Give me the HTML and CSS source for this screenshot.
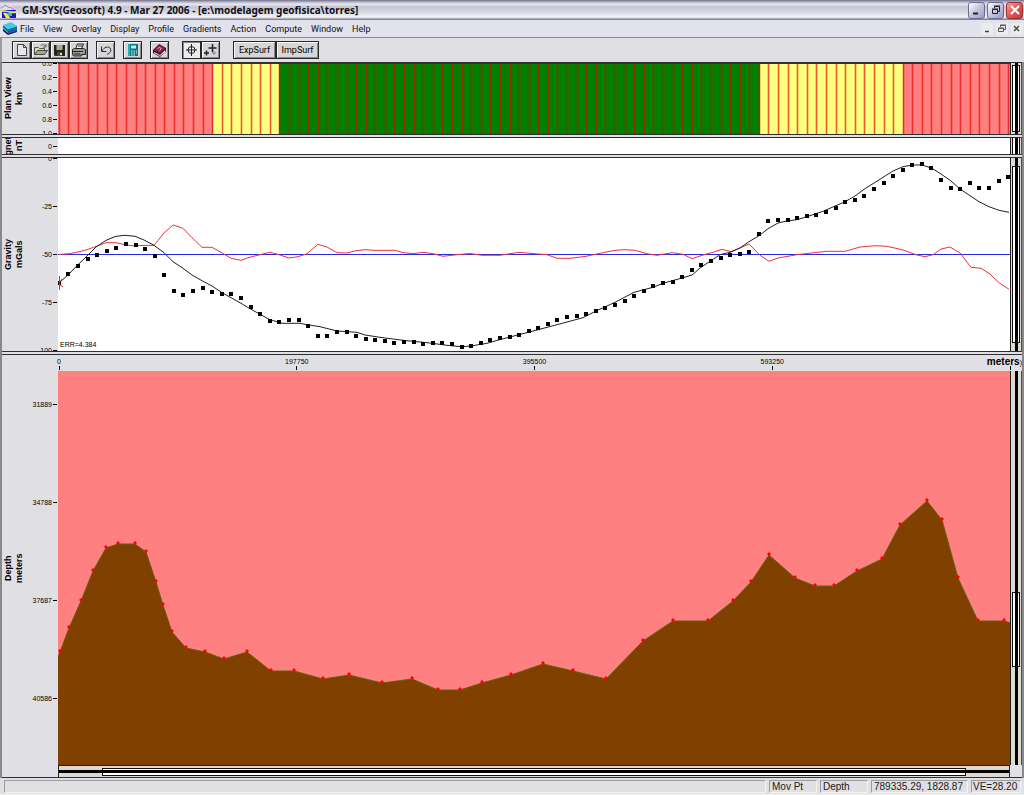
FILE: index.html
```html
<!DOCTYPE html>
<html lang="en">
<head>
<meta charset="utf-8">
<title>GM-SYS(Geosoft) 4.9</title>
<link rel="stylesheet" href="styles.css">
</head>
<body>
<div class="window">
  <header class="titlebar">
    <svg class="app-icon" width="14" height="16" viewBox="0 0 14 16" aria-hidden="true">
      <path d="M0 2h7l4 3v4H0z" fill="#dcdcf0"/>
      <path d="M0 6l3-3 3 2 4 1 4 4" fill="none" stroke="#d860d8"/>
      <path d="M0 8h14v8H0z" fill="#1818c8"/>
      <path d="M0 8c5 0 7 2 14 1v2C8 12 5 9 0 10z" fill="#e8f040"/>
      <path d="M1 11c4-1 6 2 7 5H4z" fill="#f0f040"/>
      <path d="M5 11h5v3H6z" fill="#30b8d0"/>
    </svg>
    <h1 class="title">GM-SYS(Geosoft) 4.9 - Mar 27 2006 - [e:\modelagem geofisica\torres]</h1>
    <div class="caption-buttons">
      <button class="cap" aria-label="Minimize"><svg width="14" height="14" viewBox="0 0 14 14"><path d="M3 10.500h5" stroke="#223" stroke-width="2"/></svg></button>
      <button class="cap" aria-label="Restore"><svg width="14" height="14" viewBox="0 0 14 14"><path d="M5.500 5V3.500h5v5H9M3.500 6.500h5v4h-5zM3 6h6M5 3h6" fill="none" stroke="#223"/></svg></button>
      <button class="cap cap-close" aria-label="Close"><svg width="14" height="14" viewBox="0 0 14 14"><path d="M3 3l8 8M11 3l-8 8" stroke="#fff" stroke-width="2"/></svg></button>
    </div>
  </header>

  <nav class="menubar">
    <svg class="doc-icon" width="14" height="14" viewBox="0 0 14 14" aria-hidden="true">
      <path d="M0 9l5 4 9-3v-3L5 9 0 6z" fill="#101830"/>
      <path d="M0 6l5 4 9-3V4L5 7 0 3z" fill="#0878a0"/>
      <path d="M0 3l8-3 6 4-9 3z" fill="#48c8e8"/>
      <path d="M5 10l9-3v2l-9 3z" fill="#2858b8"/>
      <path d="M0 6l5 4v1L0 7z" fill="#60e0e0"/>
    </svg>
    <a href="#">File</a><a href="#">View</a><a href="#">Overlay</a><a href="#">Display</a><a href="#">Profile</a><a href="#">Gradients</a><a href="#">Action</a><a href="#">Compute</a><a href="#">Window</a><a href="#">Help</a>
    <div class="mdi-buttons">
      <button class="mdi" aria-label="Minimize document"><svg width="12" height="12" viewBox="0 0 12 12"><path d="M4 8.500h4" stroke="#444" stroke-width="1.500"/></svg></button>
      <button class="mdi" aria-label="Restore document"><svg width="12" height="12" viewBox="0 0 12 12"><path d="M4.500 4V2.500h5v4H8M2.500 5.500h5v3h-5zM2 5h6M4 2h6" fill="none" stroke="#565a50"/></svg></button>
      <button class="mdi" aria-label="Close document"><svg width="12" height="12" viewBox="0 0 12 12"><path d="M3 3l5 5M8 3l-5 5" stroke="#444c40" stroke-width="1.500"/></svg></button>
    </div>
  </nav>

  <div class="toolbar">
    <div class="group">
      <button class="tool" aria-label="New"><svg width="17" height="16" viewBox="0 0 17 16"><path d="M4.500 2.500h6l3 3v8h-9z" fill="#e8e8ea" stroke="#444"/><path d="M10.500 2.500v3h3" fill="none" stroke="#444"/></svg></button>
      <button class="tool" aria-label="Open"><svg width="17" height="16" viewBox="0 0 17 16"><path d="M2.500 12V5.500h4l1 1h5v2" fill="#d8d8a8" stroke="#555"/><path d="M2.500 12.500l3-4h10l-3 4z" fill="#a8a878" stroke="#444"/><path d="M9 4c1-2 3-2 4 0M14 2v3h-3" fill="none" stroke="#555"/></svg></button>
      <button class="tool" aria-label="Save"><svg width="17" height="16" viewBox="0 0 17 16"><path d="M3 3h11v11H4l-1-1z" fill="#22261a"/><path d="M5.500 3h6v5h-6z" fill="#a8ac98"/><path d="M6 10h5v4H6z" fill="#45493a"/><path d="M9 11h2v2H9z" fill="#ddd"/></svg></button>
      <button class="tool" aria-label="Print"><svg width="17" height="16" viewBox="0 0 17 16"><path d="M5.500 7l2-5h6l-2 5" fill="#eee" stroke="#222"/><path d="M2.500 7.500l2-1h9l2 1v5h-3l-1 1.500h-8l-1-1.500z" fill="#999" stroke="#222"/><path d="M3 9.500h10M4 12h8M8 4h4" stroke="#222"/><path d="M10 11h2" stroke="#dddd60"/></svg></button>
    </div>
    <div class="group"><button class="tool" aria-label="Undo"><svg width="17" height="16" viewBox="0 0 17 16"><path d="M4.500 4.500v5h5M5 9c2-4 6-5 8-3 2 3 0 5-3 6.500" fill="none" stroke="#333"/></svg></button></div>
    <div class="group"><button class="tool" aria-label="Calculator"><svg width="17" height="16" viewBox="0 0 17 16"><path d="M4 2h10v12H4z" fill="#087888"/><path d="M4 2h2v12H4z" fill="#20b0b8"/><path d="M7 3.500h5v3H7z" fill="#b8f0f0"/><path d="M7 9h1.500M9.500 9h1.500M12 9h1M7 11h1.500M9.500 11h1.500M12 11h1M7 13h1.500M9.500 13h1.500" stroke="#f0f0f0"/></svg></button></div>
    <div class="group"><button class="tool" aria-label="Help book"><svg width="17" height="16" viewBox="0 0 17 16"><path d="M2 8l6-6 7 4v3l-6 6-7-4z" fill="#401030"/><path d="M3 8l5-5 6 3-5 5z" fill="#902060"/><path d="M3 10l6 3 5-5v2l-5 4-6-3z" fill="#f0e8d8"/><path d="M7 7c0-2 3-2 3 0L8.500 8.500" fill="none" stroke="#e8d050"/></svg></button></div>
    <div class="group">
      <button class="tool tool-on" aria-label="Target" aria-pressed="true"><svg width="17" height="16" viewBox="0 0 17 16"><circle cx="8.500" cy="8" r="3.500" fill="none" stroke="#222"/><path d="M8.500 2v12M3 8h11" stroke="#222"/></svg></button>
      <button class="tool" aria-label="Add points"><svg width="17" height="16" viewBox="0 0 17 16"><path d="M10.500 2v8M6.500 6h8M4.500 8.500v5M2 11h5" stroke="#222" stroke-width="1.500"/><path d="M12 9v4M10 11h4" stroke="#888"/></svg></button>
    </div>
    <div class="group"><button class="text-tool">ExpSurf</button><button class="text-tool">ImpSurf</button></div>
  </div>

  <main class="panels">
    <section class="panel">
      <h2 class="name">Plan View<br>km</h2>
      <div class="scale scale-plan"><span>0.0</span><span>0.2</span><span>0.4</span><span>0.6</span><span>0.8</span><span>1.0</span></div>
      <svg class="plot" viewBox="58 63 952 71" preserveAspectRatio="none" role="img" aria-label="Plan view">
        <path d="M58 63h155v71H58zM903 63h107v71H903z" fill="#ff8080"/>
        <path d="M213 63h66v71h-66zM760 63h143v71H760z" fill="#ffff80"/>
        <path d="M279 63h481v71H279z" fill="#008000"/>
        <path id="stations" class="stations"/>
        <path d="M58 63.500h952" stroke="#701818"/>
      </svg>
      <div class="vbar" role="scrollbar" aria-label="Plan range"><i class="thumb thumb-plan"></i></div>
    </section>

    <section class="panel">
      <h2 class="name">Magnetics<br>nT</h2>
      <div class="scale"><span>0</span></div>
      <div class="plot"></div>
      <div class="vbar" role="scrollbar" aria-label="Magnetics range"><i class="thumb"></i></div>
    </section>

    <section class="panel">
      <h2 class="name">Gravity<br>mGals</h2>
      <div class="scale scale-gravity"><span>0</span><span>-25</span><span>-50</span><span>-75</span><span>-100</span></div>
      <div class="plot">
        <svg class="graph" viewBox="58 158 952 193" preserveAspectRatio="none" role="img" aria-label="Gravity profile">
          <path d="M58 254.500h952" stroke="#2828e8"/>
          <polyline id="error" class="curve curve-error"/>
          <polyline id="calculated" class="curve"/>
          <path id="observed"/>
          <path d="M59.500 276v14M59 284l4 3M59 283l3-4" stroke="#f02020" fill="none"/>
        </svg>
        <span class="err">ERR=4.384</span>
      </div>
      <div class="vbar" role="scrollbar" aria-label="Gravity range"><i class="thumb thumb-gravity"></i></div>
    </section>

    <section class="panel panel-depth">
      <div class="xaxis"><span>0</span><span>197750</span><span>395500</span><span>593250</span><span></span></div>
      <strong class="unit">meters<small>)</small></strong>
      <h2 class="name">Depth<br>meters</h2>
      <div class="scale scale-depth"><span>31889</span><span>34788</span><span>37687</span><span>40586</span></div>
      <svg class="plot" viewBox="58 371 952 394" preserveAspectRatio="none" role="img" aria-label="Depth model">
        <path d="M58 371h952v394H58z" fill="#ff8080"/>
        <polygon id="basement" class="basement"/>
        <path id="nodes" fill="#f00"/>
      </svg>
      <div class="vbar" role="scrollbar" aria-label="Depth range"><i class="thumb thumb-depth"></i></div>
      <div class="hbar" role="scrollbar" aria-label="Distance range" aria-orientation="horizontal"><i class="thumb thumb-h"></i></div>
    </section>
  </main>

  <footer class="status">
    <span class="cell cell-wide"></span><span class="cell cell-short">Mov Pt</span><span class="cell cell-short">Depth</span><span class="cell cell-xy">789335.29, 1828.87</span><span class="cell cell-ve">VE=28.20</span>
  </footer>
</div>
<script src="profile.js"></script>
</body>
</html>
```
FILE: styles.css
```css
* { box-sizing: border-box; }

html, body { height: 100%; }

body {
  margin: 0;
  font-family: "Noto Sans", "Open Sans", sans-serif;
  color: #000;
  background: #e0dfe3;
}

.window {
  display: flex;
  flex-direction: column;
  height: 100vh;
  overflow: hidden;
}

button { padding: 0; margin: 0; font: inherit; color: inherit; }
button svg { display: block; }

.titlebar {
  display: flex;
  align-items: center;
  flex: none;
  height: 20px;
  padding: 0 1px 0 2px;
  background: linear-gradient(#70708c 0, #b4b4c8 2px, #e8e8f0 4px, #c4c4d4 7px, #dcdce6 13px, #f4f4f8 17px, #a0a0b4 19px, #66667c 20px);
}

.title {
  flex: 1;
  margin: 0 0 0 6px;
  font: bold 10px/20px "Noto Sans", "Open Sans", sans-serif;
  color: #101018;
  white-space: nowrap;
}

.caption-buttons { display: flex; gap: 2px; }

.cap {
  display: grid;
  place-items: center;
  width: 17px;
  height: 17px;
  border: 1px solid #6c6c90;
  border-radius: 3px;
  background: linear-gradient(135deg, #fff, #c4c4dc 50%, #9c9cbc);
}

.cap-close {
  border-color: #983030;
  background: linear-gradient(135deg, #f0a090, #e05858 50%, #c03838);
}

.menubar {
  display: flex;
  align-items: center;
  flex: none;
  gap: 9px;
  height: 18px;
  padding: 0 1px 0 3px;
  background: #e2e2ec;
  border-bottom: 1px solid #8c8c90;
  font: 9px/16px Roboto, "Noto Sans", sans-serif;
}

.menubar a { color: #101010; text-decoration: none; }
.doc-icon { margin-right: -6px; }

.mdi-buttons { display: flex; gap: 3px; margin-left: auto; }

.mdi {
  width: 12px;
  height: 12px;
  border: 0;
  background: #ececee;
}

.toolbar {
  display: flex;
  flex: none;
  align-items: center;
  height: 24px;
  border-left: 2px solid #9c9ca0;
  padding-left: 10px;
}

.group { display: flex; margin-right: 8px; }
.group:nth-last-child(3) { margin-right: 13px; }
.group:nth-last-child(2) { margin-right: 13px; }

.tool, .text-tool {
  height: 18px;
  border: 1px solid #282828;
  background: #d6d5d8;
  box-shadow: inset 1px 1px #f8f8f8, inset -1px -1px #8a8a8c;
}

.tool { width: 19px; }
.tool-on { background: #ececee; box-shadow: inset 1px 1px #8a8a8c; }

.text-tool {
  width: 43px;
  font: 9px/14px Roboto, "Noto Sans", sans-serif;
}

.panels {
  flex: 1;
  min-height: 0;
  display: grid;
  grid-template-rows: 73fr 18px 195fr 424fr;
  gap: 2px;
  border-left: 2px solid #88888c;
  border-right: 2px solid #88888c;
}

.panel {
  position: relative;
  display: grid;
  grid-template-columns: 28px 28px minmax(0, 1fr) 12px;
  grid-template-rows: minmax(0, 1fr);
  min-height: 0;
  overflow: hidden;
  border-top: 1px solid #303034;
  border-bottom: 1px solid #303034;
}

.panel-depth { grid-template-rows: 16px minmax(0, 1fr) 12px; }
.panel-depth .name, .panel-depth .scale, .panel-depth .plot, .panel-depth .vbar { grid-row: 2; }

.name {
  margin: 0;
  padding-left: 4px;
  width: 28px;
  justify-self: start;
  min-height: 0;
  height: 100%;
  display: flex;
  align-items: center;
  justify-content: center;
  writing-mode: vertical-rl;
  transform: rotate(180deg);
  font: bold 9px/11px "Liberation Sans", Arial, sans-serif;
  text-align: center;
  white-space: nowrap;
  overflow: hidden;
}

.scale {
  display: flex;
  flex-direction: column;
  min-height: 0;
  font: 7px/9px "Liberation Sans", Arial, sans-serif;
}

.scale span {
  flex: 1;
  display: flex;
  align-items: center;
  justify-content: flex-end;
  gap: 1px;
  padding-right: 1px;
}

.scale span::after {
  content: "";
  width: 4px;
  height: 1px;
  background: #000;
}

.scale-plan { margin: -7px 0; }
.scale-gravity { margin: -24px 0; }
.scale-depth { margin: -16px 0 17px; }

.plot {
  position: relative;
  display: block;
  width: 100%;
  height: 100%;
  min-height: 0;
  background: #fff;
}

.graph { display: block; width: 100%; height: 100%; }

.stations {
  fill: none;
  stroke: #e00000;
  stroke-width: 1.6;
  stroke-opacity: .65;
}

.curve { fill: none; stroke: #202020; }
.curve-error { stroke: #f03038; }
.basement { fill: #804000; stroke: #606010; }

.err {
  position: absolute;
  left: 2px;
  bottom: 2px;
  font: 7px/9px "Liberation Sans", Arial, sans-serif;
}

.vbar, .hbar {
  position: relative;
  overflow: hidden;
  background: #dcdad2;
}

.vbar { border-left: 1px solid #202020; border-right: 1px solid #505050; }
.hbar { grid-row: 3; grid-column: 3; border-top: 1px solid #202020; border-right: 1px solid #202020; border-left: 1px solid #202020; }

.vbar::after, .hbar::after {
  content: "";
  position: absolute;
  background: #000;
}

.vbar::after { left: 4px; width: 3px; top: 0; bottom: 0; }
.hbar::after { top: 4px; height: 3px; left: 0; right: 0; }

.thumb {
  position: absolute;
  left: 1px;
  right: 1px;
  top: -2px;
  bottom: -2px;
  background: #fff;
  border: 1px solid #101010;
}

.thumb-plan { top: 3%; bottom: 3%; }
.thumb-gravity { top: 4%; bottom: 4%; }
.thumb-depth { top: 56%; bottom: 25%; }
.thumb-h { top: 2px; bottom: 1px; left: 4.5%; right: 4.5%; }

.xaxis {
  grid-row: 1;
  grid-column: 3;
  display: flex;
  margin-left: 1px;
  font: 7px/9px "Liberation Sans", Arial, sans-serif;
}

.xaxis span {
  flex: none;
  width: 25%;
  padding-top: 2px;
  display: flex;
  flex-direction: column;
  justify-content: space-between;
  align-items: center;
}

.xaxis span:first-child { margin-left: -12.5%; }

.xaxis span::after {
  content: "";
  width: 1px;
  height: 4px;
  margin: auto 0 1px;
  background: #000;
}

.unit {
  position: absolute;
  top: 0;
  right: 0;
  font: bold 10px/14px "Liberation Sans", Arial, sans-serif;
}

.unit small { font: 7px/9px "Liberation Sans", Arial, sans-serif; }

.status {
  display: flex;
  flex: none;
  gap: 3px;
  height: 17px;
  padding: 2px 3px 1px 4px;
  border-bottom: 1px solid #f4f4ec;
  font: 10px/12px "Liberation Sans", Arial, sans-serif;
}

.cell {
  padding-left: 2px;
  border: 1px solid #9c9ca0;
  border-right-color: #f4f4f6;
  border-bottom-color: #f4f4f6;
  color: #202020;
  white-space: nowrap;
}

.cell-wide { flex: 1; }
.cell-short { width: 48px; }
.cell-xy { width: 97px; }
.cell-ve { width: 50px; padding-left: 1px; }
```
FILE: profile.js
```js
const stationX = k => 58.8 + 9.59 * k;

const observed = [
  283, 274, 266, 259, 255, 251, 248, 244, 245, 249, 256, 275, 291, 295, 291, 288, 292, 294, 294, 298,
  307, 314, 321, 322, 320, 320, 326, 336, 336, 332, 332, 336, 339, 340, 341, 343, 342, 342, 344, 343,
  343, 344, 347, 346, 343, 340, 338, 337, 335, 331, 328, 324, 320, 317, 316, 314, 311, 308, 305, 301,
  296, 291, 286, 283, 282, 277, 270, 265, 261, 258, 255, 254, 252, 234, 221, 220, 220, 218, 216, 215,
  212, 208, 202, 200, 196, 189, 183, 176, 170, 165, 164, 168, 180, 188, 189, 183, 188, 188, 181, 177
];

const calculated = [
  [59, 283], [69, 274], [77, 265.7], [87, 256], [96, 247], [106, 240.3], [116, 236.3], [125, 235.3],
  [135, 236.3], [144, 240], [154, 245.3], [164, 252.7], [173, 261.7], [183, 268.3], [192, 275],
  [202, 280.7], [212, 286], [221, 292], [231, 297.7], [241, 303.3], [250, 308.7], [259, 313.7],
  [269, 319.3], [282, 323.3], [300, 323.3], [307, 324.7], [320, 326.7], [337, 331], [357, 332.3],
  [365, 335], [380, 337.3], [403, 340.3], [430, 343], [447, 345.3], [461, 346.7], [471, 346],
  [487, 343.3], [502, 339], [519, 334.7], [538, 329.7], [557, 324.7], [583, 317.7], [596, 311],
  [615, 302.3], [634, 292.3], [653, 287.3], [663, 283.3], [682, 278], [692, 275], [701, 267.3],
  [711, 260.7], [720, 254.7], [730, 252.3], [740, 248], [749, 241.7], [759, 235.7], [768, 228.7],
  [778, 223], [787, 221], [797, 219.7], [807, 216.7], [823, 211.3], [845, 201.7], [855, 196],
  [864, 189.3], [874, 183], [884, 176.7], [893, 171], [903, 166.7], [912, 165], [922, 165],
  [932, 168.3], [941, 174], [951, 181], [960, 189], [970, 195.7], [979, 201.7], [989, 206.7],
  [999, 210.3], [1009, 212.3]
];

const error = [
  [59, 254.5], [69, 253.7], [77, 252.3], [87, 249.7], [98, 245.7], [106, 242.7], [116, 242.7],
  [125, 244.7], [132, 245.7], [154, 245.3], [164, 233], [173, 225], [183, 228.3], [192, 237.7],
  [202, 247.3], [212, 247.3], [221, 252.3], [231, 258.3], [241, 260.3], [248, 257.7], [260, 254.7],
  [270, 252.3], [280, 255], [289, 258], [298, 256.7], [307, 253.7], [318, 244.3], [327, 247],
  [337, 252.7], [347, 253], [356, 250.7], [365, 249.7], [375, 250.3], [395, 250.3], [403, 252.7],
  [413, 253.7], [423, 252.3], [433, 253.7], [443, 256.3], [457, 254.7], [470, 253.5], [482, 255.3],
  [500, 255.3], [519, 252.3], [530, 253.3], [547, 254.7], [557, 258.3], [570, 258.3], [586, 256.3],
  [600, 253.3], [615, 250.3], [625, 249.7], [635, 250.3], [647, 253.7], [657, 255.3], [672, 252.7],
  [683, 254.3], [692, 258.7], [703, 255], [713, 252.3], [722, 249.3], [731, 251.7], [749, 244],
  [760, 255.3], [769, 261.3], [778, 258], [797, 254.7], [826, 251.3], [845, 251.3], [860, 247],
  [875, 245.7], [887, 246.3], [902, 249.7], [917, 255], [925, 256.7], [933, 254.7], [941, 249],
  [950, 247], [960, 253], [971, 267.3], [981, 268.3], [990, 274], [999, 282.7], [1009, 289.3]
];

const nodes = [
  [60, 651], [69, 627], [81, 600], [93, 570], [106, 547], [118, 543], [135, 543], [146, 551],
  [156, 581], [163, 604], [172, 631], [186, 647], [205, 651], [224, 658], [247, 651], [271, 670],
  [294, 670], [323, 678], [349, 674], [382, 682], [412, 678], [438, 689], [460, 689], [482, 682],
  [511, 674], [543, 663], [573, 670], [606, 678], [643, 640], [673, 620], [708, 620], [733, 600],
  [751, 581], [769, 554], [795, 577], [815, 585], [834, 585], [857, 570], [882, 558], [900, 524],
  [927, 500], [942, 519], [958, 577], [978, 620], [1004, 620]
];

const set = (id, name, value) => document.getElementById(id).setAttribute(name, value);

set("stations", "d", observed.map((_, k) => `M${Math.round(stationX(k)) + 0.5} 63v71`).join(""));
set("observed", "d", observed.map((y, k) => `M${Math.round(stationX(k)) - 2} ${y - 2}h4v4h-4z`).join(""));
set("calculated", "points", calculated.join(" "));
set("error", "points", error.join(" "));
set("basement", "points", [[57, 659], ...nodes.map(([x, y]) => [x, y + 1]), [1011, 623], [1011, 766], [57, 766]].join(" "));
set("nodes", "d", nodes.map(([x, y]) => `M${x - 2} ${y}l2-2 2 2-2 2z`).join(""));
```
